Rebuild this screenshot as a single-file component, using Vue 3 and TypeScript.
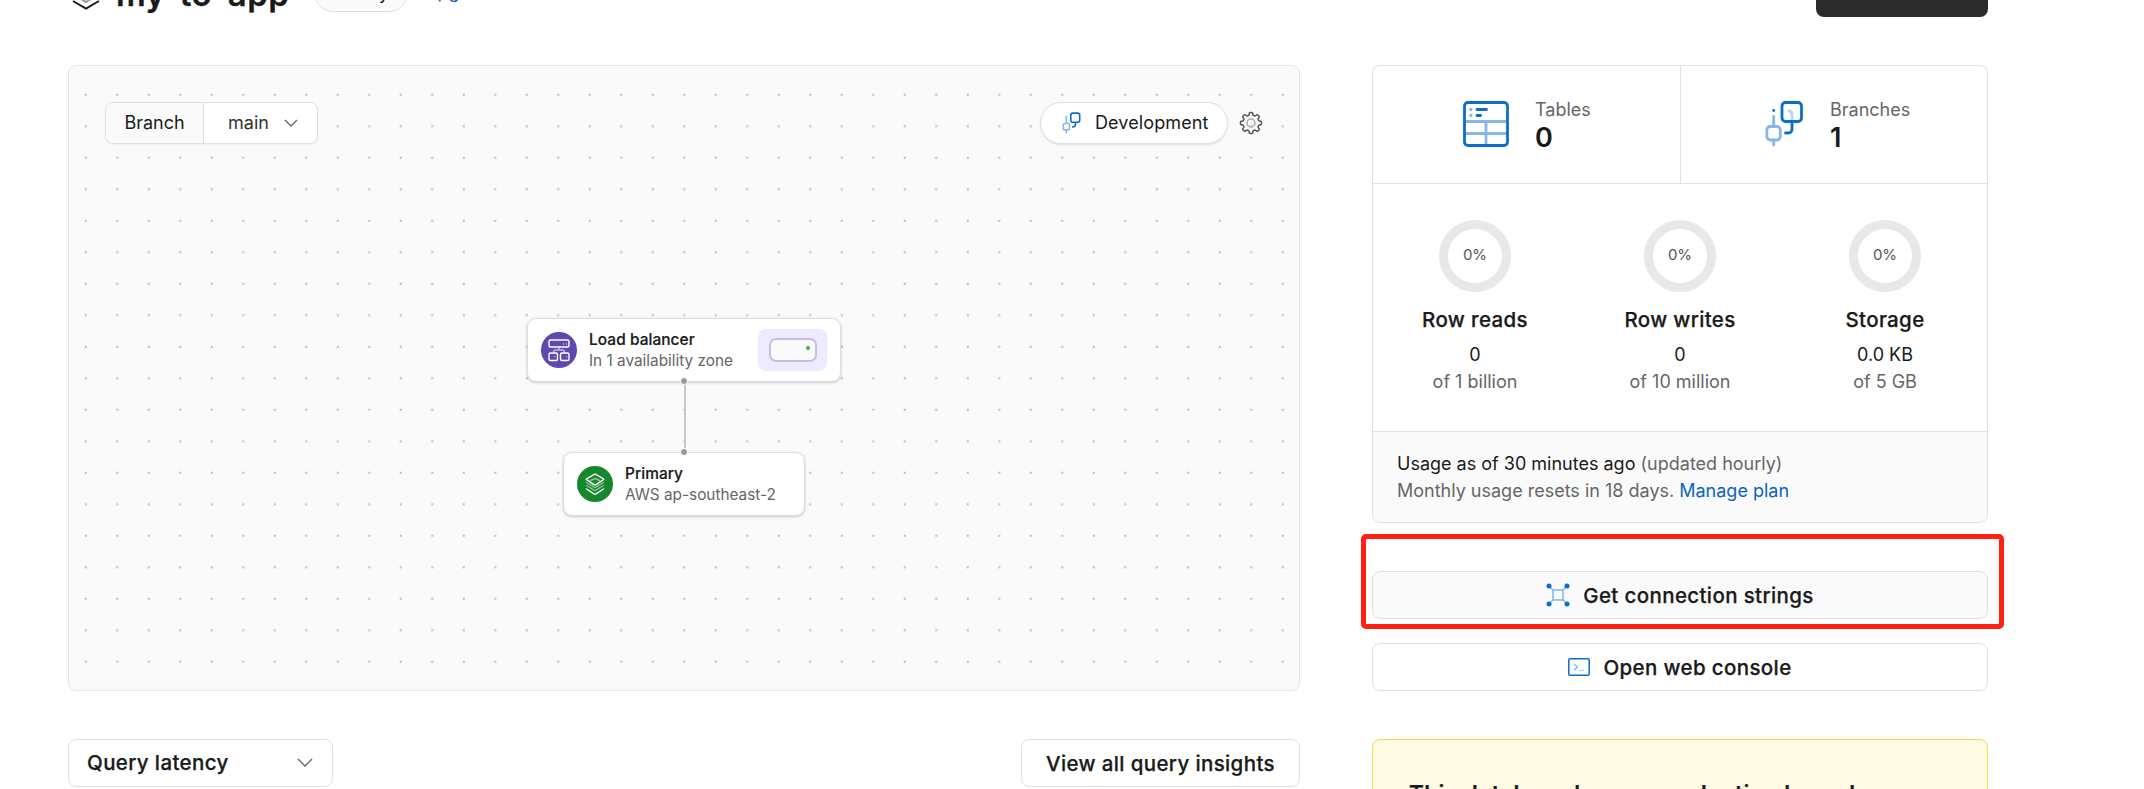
<script setup lang="ts">
interface Meter { name: string; value: string; limit: string }
const meters: Meter[] = [
  { name: 'Row reads', value: '0', limit: 'of 1 billion' },
  { name: 'Row writes', value: '0', limit: 'of 10 million' },
  { name: 'Storage', value: '0.0 KB', limit: 'of 5 GB' },
]
</script>

<template>
  <div class="page">
    <header class="head">
      <svg class="logo" width="28" height="32" viewBox="0 0 28 32" fill="none" stroke-width="2">
        <path d="M1 10 14 3 27 10 14 17Z" stroke="#1a1a1a" />
        <path d="M3 17 14 24 25 17" stroke="#999" />
        <path d="M1 23 14 30.500 27 23" stroke="#1a1a1a" />
      </svg>
      <h1>my-to-app</h1>
      <span class="plan">Hobby</span>
      <a class="upgrade">Upgrade</a>
      <button class="dark">New branch</button>
    </header>

    <div class="columns">
      <main class="left">
        <section class="canvas">
          <svg class="dots" width="1230" height="624">
            <defs>
              <pattern id="dot" x="1.250" y="13.250" width="31.500" height="31.500" patternUnits="userSpaceOnUse">
                <rect x="14.500" y="14.500" width="2" height="2" fill="#bdbdbd" />
              </pattern>
            </defs>
            <rect x="2" y="14" width="1226" height="598" fill="url(#dot)" />
          </svg>
          <div class="toolbar">
            <div class="branch">
              <span class="branch-label">Branch</span>
              <span class="branch-value">main
                <svg width="14" height="8" viewBox="0 0 14 8" fill="none" stroke="#666" stroke-width="1.400"><path d="M1 1 7 7 13 1" /></svg>
              </span>
            </div>
            <div class="tools">
              <button class="dev">
                <svg width="19" height="22" viewBox="0 0 18 22" fill="none" stroke-width="1.600">
                  <path d="M3.800 4V11M3.800 18V21.500" stroke="#86b7e8" />
                  <rect x=".8" y="11.500" width="6.200" height="6.300" rx="1.400" stroke="#86b7e8" />
                  <rect x="8.300" y="1.100" width="8.900" height="9.200" rx="2" stroke="#0b6ecb" />
                  <path d="M13 10.500V12.500Q13 15 9.500 15" stroke="#0b6ecb" />
                </svg>
                Development
              </button>
              <svg class="gear" width="24" height="24" viewBox="0 0 24 24" fill="none" stroke-width="1.500">
                <path stroke="#555" stroke-linejoin="round" d="M9.800 4.200 10.500 1.700Q12 1.200 13.500 1.700L14.200 4.200 16.100 5 18.200 3.600Q19.700 4.300 20.400 5.800L19 7.900 19.800 9.800 22.300 10.500Q22.800 12 22.300 13.500L19.800 14.200 19 16.100 20.400 18.200Q19.700 19.700 18.200 20.400L16.100 19 14.200 19.800 13.500 22.300Q12 22.800 10.500 22.300L9.800 19.800 7.900 19 5.800 20.400Q4.300 19.700 3.600 18.200L5 16.100 4.200 14.200 1.700 13.500Q1.200 12 1.700 10.500L4.200 9.800 5 7.900 3.600 5.800Q4.300 4.300 5.800 3.600L7.900 5Z" />
                <circle cx="12" cy="12" r="4" stroke="#aaa" />
              </svg>
            </div>
          </div>

          <div class="node balancer">
            <svg width="36" height="36" viewBox="0 0 36 36" fill="none" stroke="#fff" stroke-width="1.400">
              <circle cx="18" cy="18" r="18" fill="#5d49b0" stroke="none" />
              <rect x="8" y="8" width="20" height="7" rx="1.500" />
              <path d="M22 12h1M25 12h1" opacity=".6" />
              <path d="M18 15V18M12.500 20.500Q12.500 18 15 18H21Q23.500 18 23.500 20.500" opacity=".6" />
              <rect x="8" y="21" width="8.500" height="7.500" rx="1.500" /><rect x="19.500" y="21" width="8.500" height="7.500" rx="1.500" />
              <path d="M14 24v1M25.500 24v1" opacity=".5" />
            </svg>
            <div class="node-text"><b>Load balancer</b><span>In 1 availability zone</span></div>
            <div class="zone"><div class="server"><i></i></div></div>
          </div>
          <div class="wire"><i></i><i></i></div>
          <div class="node primary">
            <svg width="36" height="36" viewBox="0 0 36 36" fill="none" stroke="#fff" stroke-width="1.400" stroke-linejoin="round" stroke-linecap="round">
              <circle cx="18" cy="18" r="18" fill="#16872b" stroke="none" />
              <path d="M9.500 12.800 17 8.500Q18 8 19 8.500L26.500 12.800Q27 13.200 26.500 13.600L19 18.600Q18 19.200 17 18.600L9.500 13.600Q9 13.200 9.500 12.800Z" />
              <path d="M13.500 14.500 18 12.500 22.500 14.500M9.500 16.500 17 21.200Q18 21.700 19 21.200L26.500 16.500M9.500 19.500 17 24.200Q18 24.700 19 24.200L26.500 19.500" opacity=".5" />
              <path d="M9.500 23 17 27.800Q18 28.400 19 27.800L26.500 23" />
            </svg>
            <div class="node-text"><b>Primary</b><span>AWS ap-southeast-2</span></div>
          </div>
        </section>

        <div class="latency-row">
          <button class="btn select">Query latency
            <svg width="16" height="9" viewBox="0 0 16 9" fill="none" stroke="#666" stroke-width="1.400"><path d="M1 1 8 8 15 1" /></svg>
          </button>
          <button class="btn insights">View all query insights</button>
        </div>
      </main>

      <aside class="right">
        <section class="card">
          <div class="counts">
            <div class="count tables">
              <svg width="46" height="46" viewBox="0 0 46 46" fill="none" stroke-width="2.800">
                <path d="M2 20.500H44M2 32.500H44M23 21V44" stroke="#86b7e8" />
                <path d="M6.500 8.500H9.300M6.500 14.500H9.300" stroke="#86b7e8" />
                <path d="M14 8.500H23.500M14 14.500H17.500" stroke="#0b6ecb" stroke-linecap="round" />
                <rect x="1.500" y="1.500" width="43" height="43" rx="3.500" stroke="#0b6ecb" />
              </svg>
              <div><span>Tables</span><strong>0</strong></div>
            </div>
            <div class="count branches">
              <svg width="38" height="46" viewBox="0 0 38 46" fill="none" stroke-width="2.800" stroke-linecap="round">
                <path d="M8.700 15.500V25M8.700 39V44" stroke="#86b7e8" />
                <rect x="1.800" y="25.500" width="13.500" height="13.500" rx="3.500" stroke="#86b7e8" />
                <path d="M8.700 9.500V9.600M20.500 32H23Q27 32 27 28V21" stroke="#0b6ecb" />
                <path d="M24 10Q27 10 27 14V18" stroke="#b8d5f2" />
                <rect x="17" y="1.500" width="19.500" height="19" rx="3.500" stroke="#0b6ecb" />
              </svg>
              <div><span>Branches</span><strong>1</strong></div>
            </div>
          </div>
          <div class="meters">
            <div v-for="m in meters" :key="m.name" class="meter">
              <div class="ring">0%</div>
              <h2>{{ m.name }}</h2>
              <span class="value">{{ m.value }}</span>
              <span class="limit">{{ m.limit }}</span>
            </div>
          </div>
          <div class="usage">
            <p><em>Usage as of 30 minutes ago</em> (updated hourly)</p>
            <p>Monthly usage resets in 18 days. <a>Manage plan</a></p>
          </div>
        </section>

        <div class="connect">
          <button class="btn tinted">
            <svg width="24" height="24" viewBox="0 0 24 24" fill="none" stroke="#86b7e8" stroke-width="1.500">
              <path d="M4 4 8 8M20 4 16 8M4 20 8 16M20 20 16 16" />
              <rect x="7" y="7" width="10" height="10" rx="1" />
              <g fill="#0b6ecb" stroke="none"><circle cx="3" cy="3" r="2.500" /><circle cx="21" cy="3" r="2.500" /><circle cx="3" cy="21" r="2.500" /><circle cx="21" cy="21" r="2.500" /></g>
            </svg>
            Get connection strings
          </button>
          <div class="highlight"></div>
        </div>
        <button class="btn console">
          <svg width="22" height="18" viewBox="0 0 22 18" fill="none" stroke-width="1.500">
            <rect x=".8" y=".8" width="20.400" height="16.400" rx="1.200" stroke="#0b6ecb" />
            <path d="M6 6 9.500 9 6 12.300" stroke="#86b7e8" /><path d="M11 12.500H16" stroke="#b8d5f2" />
          </svg>
          Open web console
        </button>
        <section class="notice"><h2>This database has no production branches</h2></section>
      </aside>
    </div>
  </div>
</template>

<style>
body { margin: 0; background: #fff; }
</style>
<style scoped>
* { box-sizing: border-box; }
.page { width: 2144px; height: 789px; overflow: hidden; font-family: Inter, "Liberation Sans", sans-serif; color: #1a1a1a; font-size: 18px; font-weight: 400; }
button { font: inherit; color: inherit; padding: 0; margin: 0; white-space: nowrap; }
svg { flex: none; display: block; }
.head { display: flex; align-items: center; height: 48px; margin-top: -31px; padding: 0 156px 0 68px; }
.logo { margin: 2px 0 0 4px; }
h1 { font-size: 33px; line-height: 40px; margin: 1px 0 0 16px; font-weight: 600; white-space: nowrap; width: 174px; letter-spacing: .4px; -webkit-text-stroke: .3px; }
.plan { margin-left: 24px; width: 94px; height: 38px; padding-bottom: 2px; border: 1px solid #e0e0e0; border-radius: 20px; background: #fafafa; display: flex; align-items: center; justify-content: center; }
.upgrade { color: #0b64c0; margin: 0 0 3px 16px; }
.dark { margin-left: auto; width: 172px; height: 48px; border: 0; border-radius: 8px; background: #2b2b2b; color: #fff; font-size: 20.250px; font-weight: 500; padding-bottom: 2px; }
.columns { display: flex; gap: 72px; padding: 48px 156px 0 68px; }
.left { width: 1232px; }
.right { width: 616px; }
.canvas { position: relative; height: 626px; border: 1px solid #e6e6e6; border-radius: 8px; background: #fafafa; }
.dots { position: absolute; left: 0; top: 0; }
.toolbar { position: relative; display: flex; justify-content: space-between; align-items: center; padding: 36px 36px 0 36px; }
.branch { display: flex; width: 213px; height: 42px; border: 1px solid #e0e0e0; border-radius: 8px; overflow: hidden; background: #fff; box-shadow: 0 1px 2px #0000000d; }
.branch-label { width: 98px; border-right: 1px solid #e0e0e0; background: #fafafa; display: flex; align-items: center; justify-content: center; padding-bottom: 1px; }
.branch-value { flex: 1; display: flex; align-items: center; justify-content: space-between; padding: 0 19px 1px 24px; color: #333; }
.tools { display: flex; align-items: center; gap: 11px; }
.dev { width: 188px; height: 42px; display: flex; align-items: center; gap: 14px; padding: 0 0 1px 21px; letter-spacing: .1px; border: 1px solid #e0e0e0; border-radius: 21px; background: #fff; box-shadow: 0 1px 2px #0000001a; }
.node { position: absolute; height: 64px; display: flex; align-items: center; padding: 0 13px; border: 1px solid #dcdcdc; border-radius: 9px; background: #fff; box-shadow: 0 1px 3px #00000030; }
.balancer { left: 458px; top: 252px; width: 314px; }
.primary { left: 494px; top: 386px; width: 242px; }
.node-text { margin-left: 12px; display: flex; flex-direction: column; font-size: 15.350px; line-height: 21px; white-space: nowrap; }
.node-text b { font-weight: 500; font-size: 15.400px; letter-spacing: .08px; -webkit-text-stroke: .2px; }
.node-text span { color: #666; }
.zone { margin-left: auto; width: 69px; height: 42px; border-radius: 8px; background: #eeeaff; display: grid; place-items: center; }
.server { width: 48px; height: 24px; border: 2px solid #c9bde5; border-radius: 7px; background: #fafafa; display: flex; justify-content: flex-end; padding: 6px 5px; }
.server i { width: 4px; height: 4px; border-radius: 50%; background: #27b648; }
.wire { position: absolute; left: 611px; top: 311px; width: 8px; height: 79px; display: flex; flex-direction: column; justify-content: space-between; background: linear-gradient(#c8c8c8, #c8c8c8) 4px 0 / 2px 100% no-repeat; z-index: 2; }
.wire i { width: 8px; height: 8px; border: 1px solid #fff; border-radius: 50%; background: #999; }
.latency-row { display: flex; justify-content: space-between; margin-top: 48px; }
.btn { height: 48px; border: 1px solid #e0e0e0; border-radius: 8px; background: #fff; display: flex; align-items: center; justify-content: center; font-size: 20.500px; font-weight: 500; letter-spacing: .37px; -webkit-text-stroke: .25px; }
.select { width: 265px; justify-content: space-between; padding: 0 19px 1px 18px; }
.insights { width: 279px; }
.card { height: 458px; border: 1px solid #e0e0e0; border-radius: 8px; overflow: hidden; }
.counts { display: flex; height: 118px; border-bottom: 1px solid #e0e0e0; }
.count { display: flex; align-items: center; width: 308px; padding-bottom: 1px; }
.count + .count { border-left: 1px solid #e0e0e0; }
.tables { padding-left: 90px; gap: 26px; }
.branches { padding-left: 84px; gap: 27px; }
.count div { display: flex; flex-direction: column; }
.count span { color: #666; line-height: 25px; }
.count strong { font-size: 27px; line-height: 28px; margin-top: 2px; font-weight: 600; }
.meters { display: grid; grid-template-columns: repeat(3, 205px); height: 247px; padding-top: 36px; margin-left: -.5px; }
.meter { display: flex; flex-direction: column; align-items: center; line-height: 27px; }
.ring { width: 72px; height: 72px; border: 9px solid #e8e8e8; border-radius: 50%; font-size: 15px; line-height: 52px; text-align: center; color: #555; }
h2 { font-size: 20.500px; font-weight: 500; line-height: 30px; margin: 13px 0 6px; white-space: nowrap; letter-spacing: .35px; -webkit-text-stroke: .25px; }
.limit { color: #666; }
.usage { height: 91px; border-top: 1px solid #e0e0e0; background: #fafafa; padding: 18px 24px; color: #666; }
.usage p { margin: 0; line-height: 27px; }
.usage em { font-style: normal; color: #1a1a1a; }
.usage a { color: #0b64c0; }
.connect { position: relative; margin-top: 48px; }
.highlight { position: absolute; left: -11px; top: -37px; width: 643px; height: 95px; border: 5px solid #ff2014; border-radius: 5px; }
.right .btn { width: 616px; gap: 13px; }
.tinted { background: #fafafa; }
.console { margin-top: 24px; }
.notice { margin-top: 48px; height: 150px; border: 1px solid #ffd35a; border-radius: 8px; background: #fffae3; padding: 37px 36px; }
.notice h2 { margin: 0; font-size: 22.500px; line-height: 34px; letter-spacing: .45px; font-weight: 600; }
</style>
